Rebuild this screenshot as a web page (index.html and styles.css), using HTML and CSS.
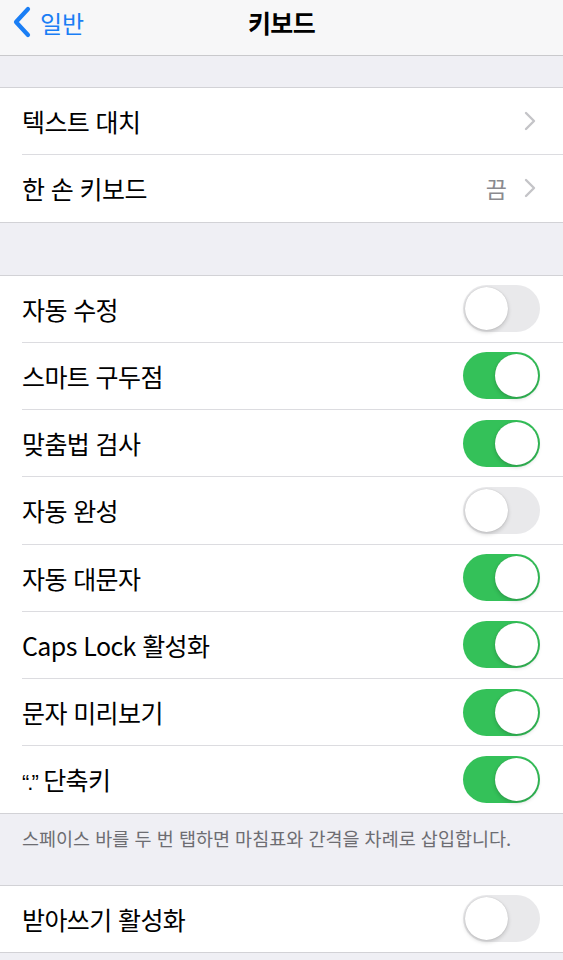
FILE: index.html
```html
<!DOCTYPE html>
<html lang="ko">
<head>
<meta charset="utf-8">
<title>키보드</title>
<link rel="stylesheet" href="styles.css">
</head>
<body>
<div class="screen">
  <header class="nav">
    <a class="back" href="#">
      <svg class="back-chevron" width="20" height="32" viewBox="0 0 20 32"><path d="M16 3 L4 16 L16 29" fill="none" stroke="#1a7ef5" stroke-width="4.2" stroke-linecap="round" stroke-linejoin="round"/></svg>
      <span>일반</span>
    </a>
    <h1 class="title">키보드</h1>
    <span class="nav-spacer"></span>
  </header>

  <div class="spacer spacer-top"></div>

  <section class="group">
    <div class="row"><div class="row-inner"><span class="label">텍스트 대치</span><span class="accessory"><svg class="chev" width="12" height="20" viewBox="0 0 12 20"><path d="M2 2 L10 10 L2 18" fill="none" stroke="#c4c4c8" stroke-width="2.4" stroke-linecap="round" stroke-linejoin="round"/></svg></span></div></div>
    <div class="row"><div class="row-inner"><span class="label">한 손 키보드</span><span class="accessory"><span class="value">끔</span><svg class="chev" width="12" height="20" viewBox="0 0 12 20"><path d="M2 2 L10 10 L2 18" fill="none" stroke="#c4c4c8" stroke-width="2.4" stroke-linecap="round" stroke-linejoin="round"/></svg></span></div></div>
  </section>

  <div class="spacer spacer-mid"></div>

  <section class="group">
    <div class="row"><div class="row-inner"><span class="label">자동 수정</span><span class="switch"></span></div></div>
    <div class="row"><div class="row-inner"><span class="label">스마트 구두점</span><span class="switch on"></span></div></div>
    <div class="row"><div class="row-inner"><span class="label">맞춤법 검사</span><span class="switch on"></span></div></div>
    <div class="row"><div class="row-inner"><span class="label">자동 완성</span><span class="switch"></span></div></div>
    <div class="row"><div class="row-inner"><span class="label">자동 대문자</span><span class="switch on"></span></div></div>
    <div class="row"><div class="row-inner"><span class="label">Caps Lock 활성화</span><span class="switch on"></span></div></div>
    <div class="row"><div class="row-inner"><span class="label">문자 미리보기</span><span class="switch on"></span></div></div>
    <div class="row"><div class="row-inner"><span class="label"><span class="quote">“.”</span> 단축키</span><span class="switch on"></span></div></div>
  </section>

  <p class="footer">스페이스 바를 두 번 탭하면 마침표와 간격을 차례로 삽입합니다.</p>

  <section class="group">
    <div class="row"><div class="row-inner"><span class="label">받아쓰기 활성화</span><span class="switch"></span></div></div>
  </section>
</div>
</body>
</html>
```

FILE: styles.css
```css
html, body {
  margin: 0;
  padding: 0;
  background: #efeff4;
}

body {
  font-family: "Noto Sans CJK KR", "Noto Sans", sans-serif;
  color: #000;
  -webkit-font-smoothing: antialiased;
}

.screen {
  width: 563px;
  min-height: 960px;
  background: #efeff4;
}

.nav {
  height: 55px;
  background: #f7f7f8;
  border-bottom: 1px solid #c9c9cc;
  display: grid;
  grid-template-columns: 1fr auto 1fr;
  align-items: center;
}

.back {
  display: flex;
  align-items: center;
  gap: 8px;
  padding-left: 12px;
  color: #1a7ef5;
  text-decoration: none;
  font-size: 24px;
  margin-top: -11px;
}

.back-chevron {
  display: block;
}

.title {
  margin: 0;
  margin-top: -11px;
  font-size: 25px;
  font-weight: 700;
  letter-spacing: -0.6px;
}

.spacer-top { height: 31px; }
.spacer-mid { height: 52px; }

.group {
  background: #fff;
  border-top: 1px solid #d2d2d6;
  border-bottom: 1px solid #d2d2d6;
}

.row {
  padding-left: 22px;
}

.row-inner {
  height: 66.25px;
  display: flex;
  align-items: center;
  justify-content: space-between;
  padding-right: 23px;
  border-bottom: 1px solid #dcdce0;
}

.row:last-child .row-inner {
  border-bottom: none;
}

.label {
  font-size: 25px;
  letter-spacing: -0.6px;
}

.quote {
  font-family: "Liberation Sans", sans-serif;
  font-size: 22px;
  letter-spacing: -2px;
}

.accessory {
  display: flex;
  align-items: center;
  gap: 17px;
  padding-right: 4px;
}

.value {
  font-size: 23px;
  color: #8a8a8f;
}

.chev { display: block; }

.switch {
  position: relative;
  width: 77px;
  height: 47px;
  border-radius: 24px;
  background: #e9e9eb;
  box-sizing: border-box;
  flex: none;
}

.switch::after {
  content: "";
  position: absolute;
  top: 2px;
  left: 2px;
  width: 43px;
  height: 43px;
  border-radius: 50%;
  background: #fff;
  box-shadow: 0 2px 4px rgba(0, 0, 0, 0.18), 0 0 1px rgba(0, 0, 0, 0.2);
}

.switch.on {
  background: #34c159;
}

.switch.on::after {
  left: 32px;
}

.footer {
  margin: 0;
  height: 71px;
  box-sizing: border-box;
  padding: 11px 22px 0;
  font-size: 18.5px;
  color: #6d6d72;
  letter-spacing: 0;
}
```
